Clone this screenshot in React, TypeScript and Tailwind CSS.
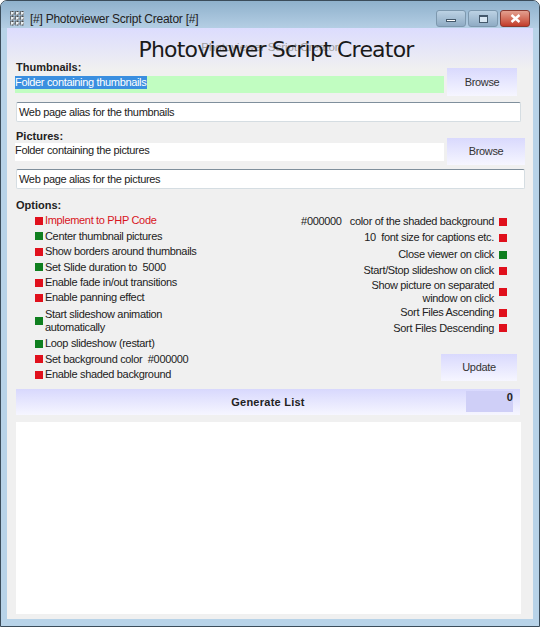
import React from "react";

const font = "font-['Liberation_Sans',sans-serif]";

function Dot({ on }: { on?: boolean }) {
  return <span className={`block w-[8px] h-[8px] shrink-0 ${on ? "bg-[#0f7f1f]" : "bg-[#e0101c]"}`} />;
}

function Left({ on, h, children, red }: { on?: boolean; h: string; children: React.ReactNode; red?: boolean }) {
  return (
    <div className={`flex items-center gap-[2px] ${h}`}>
      <Dot on={on} />
      <span className={`leading-[13px] ${red ? "text-[#d8141c]" : ""}`}>{children}</span>
    </div>
  );
}

function Right({ on, h, children }: { on?: boolean; h: string; children: React.ReactNode }) {
  return (
    <div className={`flex items-center justify-end gap-[5px] pr-[15px] ${h}`}>
      <span className="leading-[13px] text-right">{children}</span>
      <Dot on={on} />
    </div>
  );
}

function Btn({ w, h, children }: { w: string; h: string; children: React.ReactNode }) {
  return (
    <div className={`${w} ${h} flex items-center justify-center bg-gradient-to-b from-[#d9d9fd] to-[#f6f6ff] text-[#333]`}>
      {children}
    </div>
  );
}

export default function App() {
  return (
    <div className={`${font} relative w-[540px] h-[627px] overflow-hidden rounded-t-[7px] border border-[#3b4c5a] bg-[#b8d3e8] text-[11px] tracking-[-0.33px] text-[#222] flex flex-col`}>
      <div className="h-[27px] shrink-0 flex items-center justify-between pl-[9px] pr-[9px] pt-[8px] bg-gradient-to-b from-[#8fb1cc] to-[#b4cee4]">
        <div className="flex items-center gap-[6px]">
          <svg width="14" height="15" viewBox="0 0 14 15">
            {[0, 5, 10].map((x) =>
              [0, 5, 10].map((y) => (
                <rect key={`${x}-${y}`} x={x + 0.5} y={y + 0.5} width="3.5" height="3.5" fill="#e8eef2" stroke="#3c3c3c" strokeWidth="1" strokeDasharray="1 0.6" />
              ))
            )}
          </svg>
          <span className="text-[12px] tracking-[-0.25px] text-[#222] leading-none">[#] Photoviewer Script Creator [#]</span>
        </div>
        <div className="flex gap-[2px]">
          <div className="w-[30px] h-[17px] rounded-[3px] border border-[#7d98ae] bg-gradient-to-b from-[#bcd2e4] to-[#8fabc4] flex items-center justify-center">
            <span className="block w-[10px] h-[3px] mt-[3px] border border-[#44586b] bg-white" />
          </div>
          <div className="w-[30px] h-[17px] rounded-[3px] border border-[#7d98ae] bg-gradient-to-b from-[#bcd2e4] to-[#8fabc4] flex items-center justify-center">
            <span className="block w-[9px] h-[8px] border border-t-2 border-[#44586b] bg-[#d8e6f2]" />
          </div>
          <div className="w-[30px] h-[17px] rounded-[3px] border border-[#8a3a30] bg-gradient-to-b from-[#e2a090] to-[#c23a28] flex items-center justify-center text-white">
            <svg width="11" height="9" viewBox="0 0 11 9">
              <path d="M1.5 1 L9.5 8 M9.5 1 L1.5 8" stroke="#fff" strokeWidth="2.4" />
            </svg>
          </div>
        </div>
      </div>

      <div className="relative mx-[6px] h-[591px] shrink-0 bg-gradient-to-b from-[#dcdcfe] from-0% to-[#f0f0f0] to-[7%] pl-[8px] pr-[6px]">
        <div className="absolute left-0 right-0 top-[12px] text-center text-[11.5px] tracking-normal text-[#a0a0a0] leading-[14px]">Photoviewer Script Creator</div>
        <div className="relative h-[28px] box-content pt-[8px] pl-[10px] text-center text-[22px] leading-[28px] text-[#1a1a1a] font-['DejaVu_Sans',sans-serif] tracking-[-0.8px]">
          Photoviewer Script Creator
        </div>

        <div className="flex gap-[3px] mt-[4px]">
          <div className="w-[429px]">
            <div className="font-bold tracking-normal leading-[11px] h-[11px] ml-[1px] -mt-[6px]">Thumbnails:</div>
            <div className="h-[17px] mt-[3px] bg-[#c1fdc1]">
              <span className="block w-[132px] h-[13px] leading-[13px] whitespace-nowrap bg-[#3a8fe0] text-white">Folder containing thumbnails</span>
            </div>
          </div>
          <Btn w="w-[70px]" h="h-[28px]">Browse</Btn>
        </div>

        <div className="mt-[6px] ml-[1px] w-[505px] h-[20px] rounded-[2px] border border-[#d5dde2] border-t-[#7f8f9c] bg-white flex items-center pl-[2px]">Web page alias for the thumbnails</div>

        <div className="flex gap-[3px] mt-[16px]">
          <div className="w-[429px]">
            <div className="font-bold tracking-normal leading-[11px] h-[11px] ml-[1px] -mt-[7px]">Pictures:</div>
            <div className="h-[18px] mt-[1px] bg-white leading-[15px]">Folder containing the pictures</div>
          </div>
          <Btn w="w-[78px]" h="h-[27px]">Browse</Btn>
        </div>

        <div className="mt-[4px] ml-[1px] w-[509px] h-[20px] rounded-[2px] border border-[#d5dde2] border-t-[#7f8f9c] bg-white flex items-center pl-[2px]">Web page alias for the pictures</div>

        <div className="font-bold tracking-normal leading-[11px] ml-[1px] mt-[11px]">Options:</div>

        <div className="flex mt-[1px]">
          <div className="w-[260px] pl-[20px] pt-[1px]">
            <Left h="h-[15px]" red>Implement to PHP Code</Left>
            <Left h="h-[16px]" on>Center thumbnail pictures</Left>
            <Left h="h-[15px]">Show borders around thumbnails</Left>
            <Left h="h-[16px]" on>Set Slide duration to&nbsp; 5000</Left>
            <Left h="h-[15px]">Enable fade in/out transitions</Left>
            <Left h="h-[15px]">Enable panning effect</Left>
            <Left h="h-[31px]" on>
              Start slideshow animation
              <br />
              automatically
            </Left>
            <Left h="h-[15px]" on>Loop slideshow (restart)</Left>
            <Left h="h-[16px]">Set background color&nbsp; #000000</Left>
            <Left h="h-[15px]">Enable shaded background</Left>
          </div>
          <div className="w-[247px] flex flex-col">
            <Right h="h-[15px] mt-[2px]">#000000&nbsp; &nbsp;color of the shaded background</Right>
            <Right h="h-[17px]">10&nbsp; font size for captions etc.</Right>
            <Right h="h-[17px]" on>Close viewer on click</Right>
            <Right h="h-[15px]">Start/Stop slideshow on click</Right>
            <Right h="h-[27px]">
              Show picture on separated
              <br />
              window on click
            </Right>
            <Right h="h-[15px]">Sort Files Ascending</Right>
            <Right h="h-[16px]">Sort Files Descending</Right>
            <div className="flex justify-end mt-[18px] pr-[5px]">
              <Btn w="w-[76px]" h="h-[27px]">Update</Btn>
            </div>
          </div>
        </div>

        <div className="relative ml-[1px] w-[504px] h-[26px] bg-gradient-to-b from-[#d8d8fd] to-[#f6f6ff] flex items-center justify-center font-bold tracking-[0.25px] text-[#222] mt-[7px]">
          Generate List
          <div className="absolute left-[450px] top-[2px] w-[47px] h-[21px] bg-[#cfcff7] text-right leading-[11px] pt-[1px]">0</div>
        </div>

        <div className="mt-[7px] ml-[1px] w-[505px] h-[192px] bg-white" />
      </div>
    </div>
  );
}
